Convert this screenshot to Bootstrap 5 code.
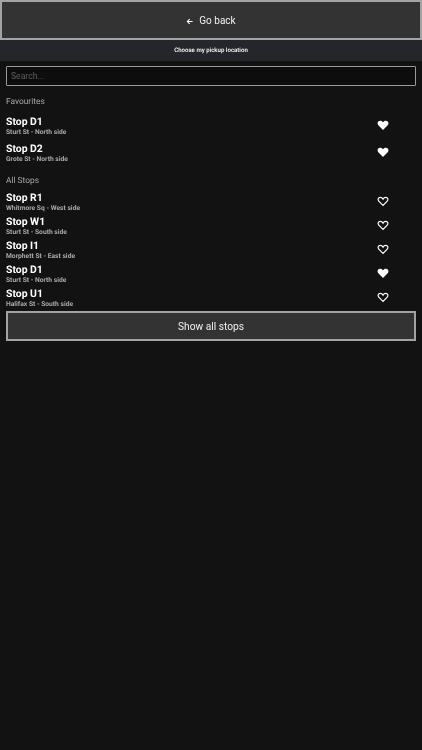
<!DOCTYPE html>
<html lang="en">
<head>
<meta charset="utf-8">
<title>Choose my pickup location</title>
<link href="https://cdn.jsdelivr.net/npm/bootstrap@5.3.0/dist/css/bootstrap.min.css" rel="stylesheet">
<style>
html, body { background: #121212; min-height: 100%; }
body { font-family: Roboto, "Liberation Sans", sans-serif; color: #fff; height: 750px; overflow: hidden; text-rendering: geometricPrecision; }
.page-layer { will-change: transform; }
.bar-btn { background: #333; border: 2px solid #a3a3a3; border-radius: 0; color: #f0f0f0; width: 100%; display: block; padding: 0; }
.bar-btn:hover { background: #333; color: #f0f0f0; border-color: #a3a3a3; }
.back-btn { height: 40px; font-size: 10px; line-height: 38px; }
.arrow { width: 7px; height: 7px; margin-right: 6px; vertical-align: -0.5px; }
.title-bar { height: 21px; background: #24262b; font-size: 6.1px; font-weight: 500; line-height: 22px; color: #fff; }
.search-box { height: 20px; min-height: 0; background: #0d0d0d; border: 1px solid #9a9a9a; border-radius: 1px; color: #fff; font-size: 8.6px; padding: 0 4px; box-shadow: none; }
.search-box::placeholder { color: #5f5f5f; opacity: 1; }
.search-box:focus { background: #0d0d0d; border-color: #9a9a9a; box-shadow: none; color: #fff; }
.wrap { padding: 5px 6px 0 6px; }
.sec-title { font-size: 8.4px; line-height: 12px; color: #a8a8a8; }
.sec-fav { margin-top: 10px; }
.sec-all { margin-top: 5.5px; }
.list-fav { margin-top: 6.5px; }
.list-all { margin-top: 3.5px; }
.stop-row { height: 24px; }
.fav-row { height: 27.5px; }
.stop-name { font-size: 10.4px; font-weight: 700; line-height: 13px; color: #fff; }
.stop-sub { font-size: 6.7px; font-weight: 700; line-height: 7px; padding-top: 1px; color: #a8a8a8; }
.heart-cell { width: 12px; margin-right: 27.500px; margin-top: 4px; }
.heart-icon { width: 12px; height: 12px; display: block; }
.more-btn { height: 30px; font-size: 10.2px; line-height: 27px; text-align: center; }
</style>
</head>
<body>
<svg class="d-none" aria-hidden="true">
  <symbol id="h-full" viewBox="0 0 24 24"><path fill="#fff" d="M12 22 2.600 12.400C-.2 9.500.9 3.500 6.500 3.500c2.400 0 4.300 1.300 5.500 3.200 1.200-1.900 3.100-3.200 5.500-3.200 5.600 0 6.700 6 3.900 8.900z"/></symbol>
  <symbol id="h-line" viewBox="0 0 24 24"><path fill="none" stroke="#fff" stroke-width="2.400" d="M12 20.800 3.500 12.100C1 9.500 2.100 4.700 6.500 4.700c2.400 0 4.300 1.500 5.500 3.600 1.200-2.100 3.100-3.600 5.500-3.600 4.400 0 5.500 4.800 3 7.400z"/></symbol>
</svg>
<div class="page-layer">
<button type="button" class="btn bar-btn back-btn">
  <svg class="arrow" viewBox="0 0 16 16" aria-hidden="true"><path d="M15 8H3M8.500 2.500 3 8l5.500 5.500" fill="none" stroke="#fff" stroke-width="2.400"/></svg>Go back
</button>
<div class="title-bar text-center">Choose my pickup location</div>
<div class="wrap">
  <input class="form-control search-box" type="text" placeholder="Search..." aria-label="Search">
  <div class="sec-title sec-fav">Favourites</div>
  <div class="list-fav">
    <div class="fav-row d-flex justify-content-between align-items-start">
      <div><div class="stop-name">Stop D1</div><div class="stop-sub">Sturt St - North side</div></div>
      <div class="heart-cell"><svg class="heart-icon"><use href="#h-full"/></svg></div>
    </div>
    <div class="fav-row d-flex justify-content-between align-items-start">
      <div><div class="stop-name">Stop D2</div><div class="stop-sub">Grote St - North side</div></div>
      <div class="heart-cell"><svg class="heart-icon"><use href="#h-full"/></svg></div>
    </div>
  </div>
  <div class="sec-title sec-all">All Stops</div>
  <div class="list-all">
    <div class="stop-row d-flex justify-content-between align-items-start">
      <div><div class="stop-name">Stop R1</div><div class="stop-sub">Whitmore Sq - West side</div></div>
      <div class="heart-cell"><svg class="heart-icon"><use href="#h-line"/></svg></div>
    </div>
    <div class="stop-row d-flex justify-content-between align-items-start">
      <div><div class="stop-name">Stop W1</div><div class="stop-sub">Sturt St - South side</div></div>
      <div class="heart-cell"><svg class="heart-icon"><use href="#h-line"/></svg></div>
    </div>
    <div class="stop-row d-flex justify-content-between align-items-start">
      <div><div class="stop-name">Stop I1</div><div class="stop-sub">Morphett St - East side</div></div>
      <div class="heart-cell"><svg class="heart-icon"><use href="#h-line"/></svg></div>
    </div>
    <div class="stop-row d-flex justify-content-between align-items-start">
      <div><div class="stop-name">Stop D1</div><div class="stop-sub">Sturt St - North side</div></div>
      <div class="heart-cell"><svg class="heart-icon"><use href="#h-full"/></svg></div>
    </div>
    <div class="stop-row d-flex justify-content-between align-items-start">
      <div><div class="stop-name">Stop U1</div><div class="stop-sub">Halifax St - South side</div></div>
      <div class="heart-cell"><svg class="heart-icon"><use href="#h-line"/></svg></div>
    </div>
  </div>
  <button type="button" class="btn bar-btn more-btn">Show all stops</button>
</div>
</div>
<script src="https://cdn.jsdelivr.net/npm/bootstrap@5.3.0/dist/js/bootstrap.bundle.min.js"></script>
</body>
</html>
